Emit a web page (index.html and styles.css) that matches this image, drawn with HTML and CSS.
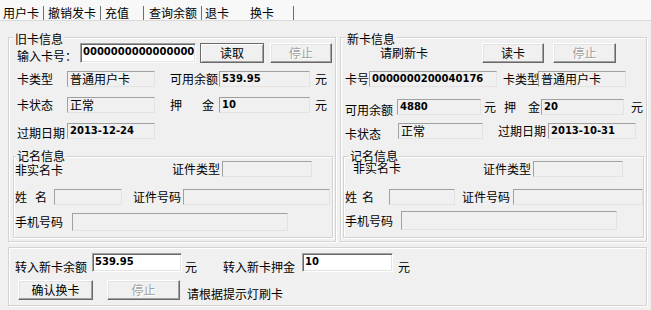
FILE: index.html
```html
<!DOCTYPE html>
<html>
<head>
<meta charset="utf-8">
<link rel="stylesheet" href="styles.css">
</head>
<body>
<div class="tabs">
  <span class="tab t1 sep">用户卡</span>
  <span class="tab t2 sep">撤销发卡</span>
  <span class="tab t3 sep">充值</span>
  <span class="tab t4 sep">查询余额</span>
  <span class="tab t5">退卡</span>
  <span class="tab t6 sep">换卡</span>
</div>

<div class="top">
  <div class="grp old">
    <span class="legend lg-old">旧卡信息</span>
    <div class="row h20 mt5 pl8">
      <span class="lbl w63 low">输入卡号：</span>
      <span class="inp w116 num">0000000000000000</span>
      <span class="btn dflt w64 ml4">读取</span>
      <span class="btn dis w62 ml6">停止</span>
    </div>
    <div class="row h16 mt8 pl8">
      <span class="lbl w50">卡类型</span>
      <span class="fld w88">普通用户卡</span>
      <span class="lbl w49 ml15">可用余额</span>
      <span class="fld w91 num">539.95</span>
      <span class="lbl ml5">元</span>
    </div>
    <div class="row h16 mt10 pl8">
      <span class="lbl w50">卡状态</span>
      <span class="fld w88">正常</span>
      <span class="lbl split w49 pr5 ml15"><span>押</span><span>金</span></span>
      <span class="fld w91 num">10</span>
      <span class="lbl ml5">元</span>
    </div>
    <div class="row h16 mt10 pl8">
      <span class="lbl w50 low2">过期日期</span>
      <span class="fld w88 num">2013-12-24</span>
    </div>
    <div class="grp inner in-old">
      <span class="legend lg-in-old">记名信息</span>
      <div class="row h16 mt4 pl1">
        <span class="lbl w48 tight down">非实名卡</span>
        <span class="lbl w50 ml109">证件类型</span>
        <span class="fld w90"></span>
      </div>
      <div class="row h16 mt12 pl1">
        <span class="lbl split w39 pr7"><span>姓</span><span>名</span></span>
        <span class="fld w68"></span>
        <span class="lbl w50 ml11">证件号码</span>
        <span class="fld w147"></span>
      </div>
      <div class="row h18 mt8 pl1">
        <span class="lbl w57">手机号码</span>
        <span class="fld w216"></span>
      </div>
    </div>
  </div>

  <div class="grp new">
    <span class="legend lg-new">新卡信息</span>
    <div class="row h20 mt5 pl39">
      <span class="lbl w48">请刷新卡</span>
      <span class="btn w62 ml54">读卡</span>
      <span class="btn dis w63 ml9">停止</span>
    </div>
    <div class="row h16 mt8 pl4">
      <span class="lbl w24">卡号</span>
      <span class="fld w128 num">0000000200040176</span>
      <span class="lbl w35 ml6">卡类型</span>
      <span class="fld w88">普通用户卡</span>
    </div>
    <div class="row h16 mt12 pl4">
      <span class="lbl w52 low">可用余额</span>
      <span class="fld w84 num">4880</span>
      <span class="lbl w12 ml3">元</span>
      <span class="lbl split w37 pr1 ml8"><span>押</span><span>金</span></span>
      <span class="fld w83 num">20</span>
      <span class="lbl ml7">元</span>
    </div>
    <div class="row h16 mt8 pl4">
      <span class="lbl w53 low">卡状态</span>
      <span class="fld w85">正常</span>
      <span class="lbl w50 ml15">过期日期</span>
      <span class="fld w88 num">2013-10-31</span>
    </div>
    <div class="grp inner in-new">
      <span class="legend lg-in-new">记名信息</span>
      <div class="row h16 mt4 pl9">
        <span class="lbl w48 tight up">非实名卡</span>
        <span class="lbl w50 ml82">证件类型</span>
        <span class="fld w90"></span>
      </div>
      <div class="row h16 mt12 pl1">
        <span class="lbl split w44 pr15"><span>姓</span><span>名</span></span>
        <span class="fld w66"></span>
        <span class="lbl w51 ml7">证件号码</span>
        <span class="fld w130"></span>
      </div>
      <div class="row h19 mt6 pl1">
        <span class="lbl w56">手机号码</span>
        <span class="fld w216"></span>
      </div>
    </div>
  </div>
</div>

<div class="grp bottom">
  <div class="row h19 mt5 pl6 end">
    <span class="lbl w77 drop">转入新卡余额</span>
    <span class="inp w90 num">539.95</span>
    <span class="lbl w12 ml3 drop">元</span>
    <span class="lbl w79 ml26 drop">转入新卡押金</span>
    <span class="inp w91 num">10</span>
    <span class="lbl ml5 drop">元</span>
  </div>
  <div class="row h20 mt8 pl9">
    <span class="btn w75">确认换卡</span>
    <span class="btn dis w73 ml14">停止</span>
    <span class="lbl ml7 hint">请根据提示灯刷卡</span>
  </div>
</div>
</body>
</html>
```

FILE: styles.css
```css
* { box-sizing: border-box; }

body {
  margin: 0;
  width: 651px;
  height: 310px;
  overflow: hidden;
  background: #f0f0f0;
  color: #000;
  font: 12px/14px "Noto Sans CJK SC", "Noto Sans", sans-serif;
}

/* ---------- tab strip ---------- */
.tabs {
  height: 21px;
  display: flex;
  align-items: flex-end;
  background: #f8f8f8;
  border-bottom: 1px solid #d9d9d9;
}
.tab {
  height: 14px;
  line-height: 14px;
  white-space: nowrap;
}
.sep { border-right: 1px solid #6e6e6e; }
.t1 { width: 44px; padding-left: 3px; }
.t2 { width: 57px; padding-left: 4px; }
.t3 { width: 43px; padding-left: 4px; }
.t4 { width: 58px; padding-left: 5px; }
.t5 { width: 44px; padding-left: 3px; }
.t6 { width: 48px; padding-left: 4px; }

/* ---------- group boxes ---------- */
.top {
  display: flex;
  gap: 4px;
  margin: 16px 0 0 8px;
}
.grp {
  position: relative;
  border: 1px solid #d3d3d3;
  box-shadow: inset 1px 1px 0 #fff, 1px 1px 0 #fff;
}
.old { width: 328px; height: 205px; }
.new { width: 307px; height: 205px; }
.inner { height: 82px; margin-top: 17px; }
.in-old { width: 320px; margin-left: 4px; }
.in-new { width: 301px; margin-left: 2px; }
.bottom { width: 639px; height: 59px; margin: 5px 0 0 8px; }

.legend {
  position: absolute;
  top: -4px;
  padding: 0 1px;
  background: #f0f0f0;
  line-height: 10px;
  white-space: nowrap;
}
.inner > .legend { top: -6px; }
.lg-old { left: 5px; }
.lg-new { left: 5px; }
.lg-in-old { left: 2px; }
.lg-in-new { left: 5px; }

/* ---------- rows ---------- */
.row { display: flex; align-items: center; }
.end { align-items: flex-end; }
.h16 { height: 16px; }
.h18 { height: 18px; }
.h19 { height: 19px; }
.h20 { height: 20px; }

.mt4 { margin-top: 4px; }
.mt5 { margin-top: 5px; }
.mt6 { margin-top: 6px; }
.mt8 { margin-top: 8px; }
.mt10 { margin-top: 10px; }
.mt12 { margin-top: 12px; }

.pl1 { padding-left: 1px; }
.pl4 { padding-left: 4px; }
.pl6 { padding-left: 6px; }
.pl8 { padding-left: 8px; }
.pl9 { padding-left: 9px; }
.pl39 { padding-left: 39px; }

.ml3 { margin-left: 3px; }
.ml4 { margin-left: 4px; }
.ml5 { margin-left: 5px; }
.ml6 { margin-left: 6px; }
.ml7 { margin-left: 7px; }
.ml8 { margin-left: 8px; }
.ml9 { margin-left: 9px; }
.ml11 { margin-left: 11px; }
.ml14 { margin-left: 14px; }
.ml15 { margin-left: 15px; }
.ml26 { margin-left: 26px; }
.ml54 { margin-left: 54px; }
.ml82 { margin-left: 82px; }
.ml109 { margin-left: 109px; }

.pr1 { padding-right: 1px; }
.pr5 { padding-right: 5px; }
.pr7 { padding-right: 7px; }
.pr15 { padding-right: 15px; }

.w12 { width: 12px; }
.w24 { width: 24px; }
.w35 { width: 35px; }
.w37 { width: 37px; }
.w39 { width: 39px; }
.w44 { width: 44px; }
.w48 { width: 48px; }
.w49 { width: 49px; }
.w50 { width: 50px; }
.w51 { width: 51px; }
.w52 { width: 52px; }
.w53 { width: 53px; }
.w56 { width: 56px; }
.w57 { width: 57px; }
.w62 { width: 62px; }
.w63 { width: 63px; }
.w64 { width: 64px; }
.w66 { width: 66px; }
.w68 { width: 68px; }
.w73 { width: 73px; }
.w75 { width: 75px; }
.w77 { width: 77px; }
.w79 { width: 79px; }
.w83 { width: 83px; }
.w84 { width: 84px; }
.w85 { width: 85px; }
.w88 { width: 88px; }
.w90 { width: 90px; }
.w91 { width: 91px; }
.w116 { width: 116px; }
.w128 { width: 128px; }
.w130 { width: 130px; }
.w147 { width: 147px; }
.w216 { width: 216px; }

/* ---------- labels ---------- */
.lbl {
  flex: none;
  white-space: nowrap;
  line-height: 14px;
}
.split { display: flex; justify-content: space-between; }
.low { margin-top: 5px; }
.low2 { margin-top: 4px; }
.tight { line-height: 12px; }
.down { align-self: flex-start; margin-top: 3px; }
.up { align-self: flex-start; margin-top: 1px; }
.drop { margin-bottom: -2px; }
.hint { align-self: flex-end; margin-bottom: -1px; }

/* ---------- fields ---------- */
.fld, .inp {
  flex: none;
  height: 100%;
  padding-left: 2px;
  line-height: 13px;
  overflow: hidden;
  white-space: nowrap;
  border: 1px solid;
}
.fld {
  border-color: #a0a0a0 #e3e3e3 #e3e3e3 #a0a0a0;
}
.inp {
  background: #fff;
  padding-left: 1px;
  border-color: #a0a0a0 #fff #fff #a0a0a0;
  box-shadow: inset 1px 1px 0 #696969, inset -1px -1px 0 #e3e3e3;
}
.num {
  font: bold 10px/12px "DejaVu Sans", sans-serif;
  padding-top: 1px;
}
.inp.num { padding-top: 2px; padding-left: 2px; }

/* ---------- buttons ---------- */
.btn {
  flex: none;
  height: 100%;
  display: flex;
  align-items: center;
  justify-content: center;
  border: 1px solid;
  border-color: #fff #696969 #696969 #fff;
  box-shadow: inset -1px -1px 0 #a0a0a0, inset 1px 1px 0 #e3e3e3;
}
.dflt {
  border-color: #6a6a6a;
  box-shadow: inset 1px 1px 0 #fff, inset -1px -1px 0 #a0a0a0;
}
.dis {
  color: #a0a0a0;
  text-shadow: 1px 1px 0 #fff;
}
```
